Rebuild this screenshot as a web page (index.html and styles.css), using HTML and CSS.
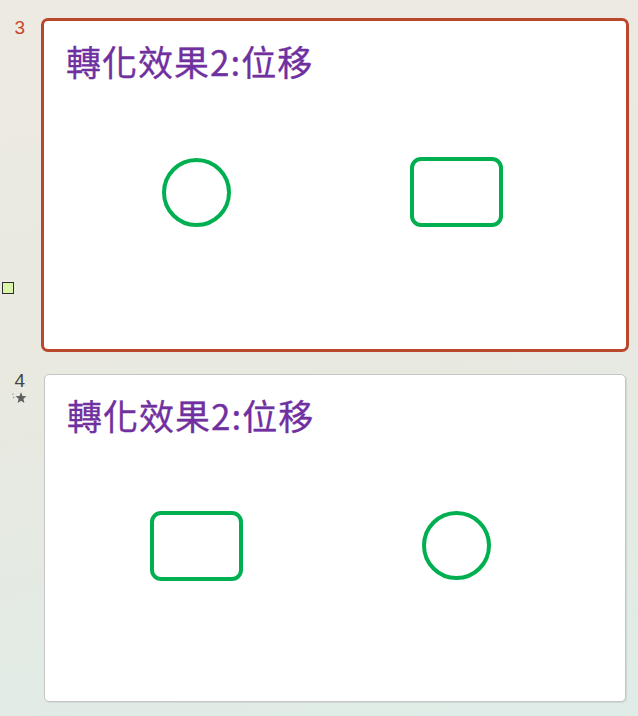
FILE: index.html
```html
<!DOCTYPE html>
<html lang="zh-Hant">
<head>
    <meta charset="UTF-8">
    <meta name="viewport" content="width=device-width, initial-scale=1.0">
    <title>投影片縮圖</title>
    <link rel="stylesheet" href="styles.css">
</head>
<body>
    <div class="pane">
        <div class="row">
            <div class="gutter">
                <span class="num num-active">3</span>
                <span class="marker"></span>
            </div>
            <div class="slide slide-active">
                <h2 class="title">轉化效果2:位移</h2>
                <div class="shape circle shape-left"></div>
                <div class="shape box shape-right"></div>
            </div>
        </div>

        <div class="row">
            <div class="gutter">
                <span class="num">4</span>
                <span class="anim">
                    <svg width="15" height="12" viewBox="0 0 15 12">
                        <circle cx="1" cy="2" r="0.7" fill="#8a8a8a"/>
                        <circle cx="1.6" cy="5.5" r="0.7" fill="#8a8a8a"/>
                        <polygon points="9,0.3 10.5,4 14.5,4.3 11.4,6.8 12.4,11 9,8.7 5.6,11 6.6,6.8 3.5,4.3 7.5,4" fill="#5f5f5f"/>
                    </svg>
                </span>
            </div>
            <div class="slide">
                <h2 class="title">轉化效果2:位移</h2>
                <div class="shape box shape-left2"></div>
                <div class="shape circle shape-right2"></div>
            </div>
        </div>
    </div>
</body>
</html>
```

FILE: styles.css
```css
html, body {
    height: 100%;
}
body {
    margin: 0;
    background: linear-gradient(170deg, #edeae2 0%, #e9e9e0 45%, #dfece7 100%);
    font-family: "Liberation Sans", Arial, sans-serif;
    overflow: hidden;
}
.pane {
    padding-top: 18px;
    display: flex;
    flex-direction: column;
    gap: 19px;
}
.row {
    display: flex;
    height: 334px;
}
.gutter {
    width: 41px;
    flex-shrink: 0;
    display: flex;
    flex-direction: column;
    align-items: flex-end;
    padding-right: 16px;
    box-sizing: border-box;
}
.num {
    font-size: 19px;
    line-height: 20px;
    color: #444;
}
.num-active {
    color: #c8452b;
}
.marker {
    margin-top: auto;
    margin-bottom: 58px;
    align-self: flex-start;
    margin-left: 2px;
    width: 12px;
    height: 12px;
    box-sizing: border-box;
    background-color: #daf5a9;
    border: 1px solid #2e2e2e;
}
.anim {
    margin-top: 1px;
    margin-right: -2px;
    display: flex;
}
.slide {
    position: relative;
    box-sizing: border-box;
    width: 582px;
    height: 328px;
    margin: 3px 0 0 3px;
    background-color: #fff;
    border: 1px solid #c5c5c5;
    border-radius: 5px;
    box-shadow: 1px 1px 1px rgba(0, 0, 0, 0.08);
}
.slide-active {
    width: 588px;
    height: 334px;
    margin: 0;
    border: 3px solid #b8472b;
    border-radius: 7px;
    box-shadow: none;
}
.title {
    margin: 0;
    padding: 22px 0 0 22px;
    font-family: "Noto Sans CJK TC", "Noto Sans CJK SC", sans-serif;
    font-size: 35px;
    font-weight: 400;
    letter-spacing: 1px;
    line-height: 36px;
    color: #7030a0;
    -webkit-text-stroke: 0.3px #7030a0;
}
.shape {
    position: absolute;
    box-sizing: border-box;
    border: 4px solid #00b050;
}
.circle {
    width: 69px;
    height: 69px;
    border-radius: 50%;
}
.box {
    width: 93px;
    height: 70px;
    border-radius: 11px;
}
.shape-left {
    left: 118px;
    top: 137px;
}
.shape-right {
    left: 366px;
    top: 136px;
}
.shape-left2 {
    left: 105px;
    top: 136px;
}
.shape-right2 {
    left: 377px;
    top: 136px;
}
```
